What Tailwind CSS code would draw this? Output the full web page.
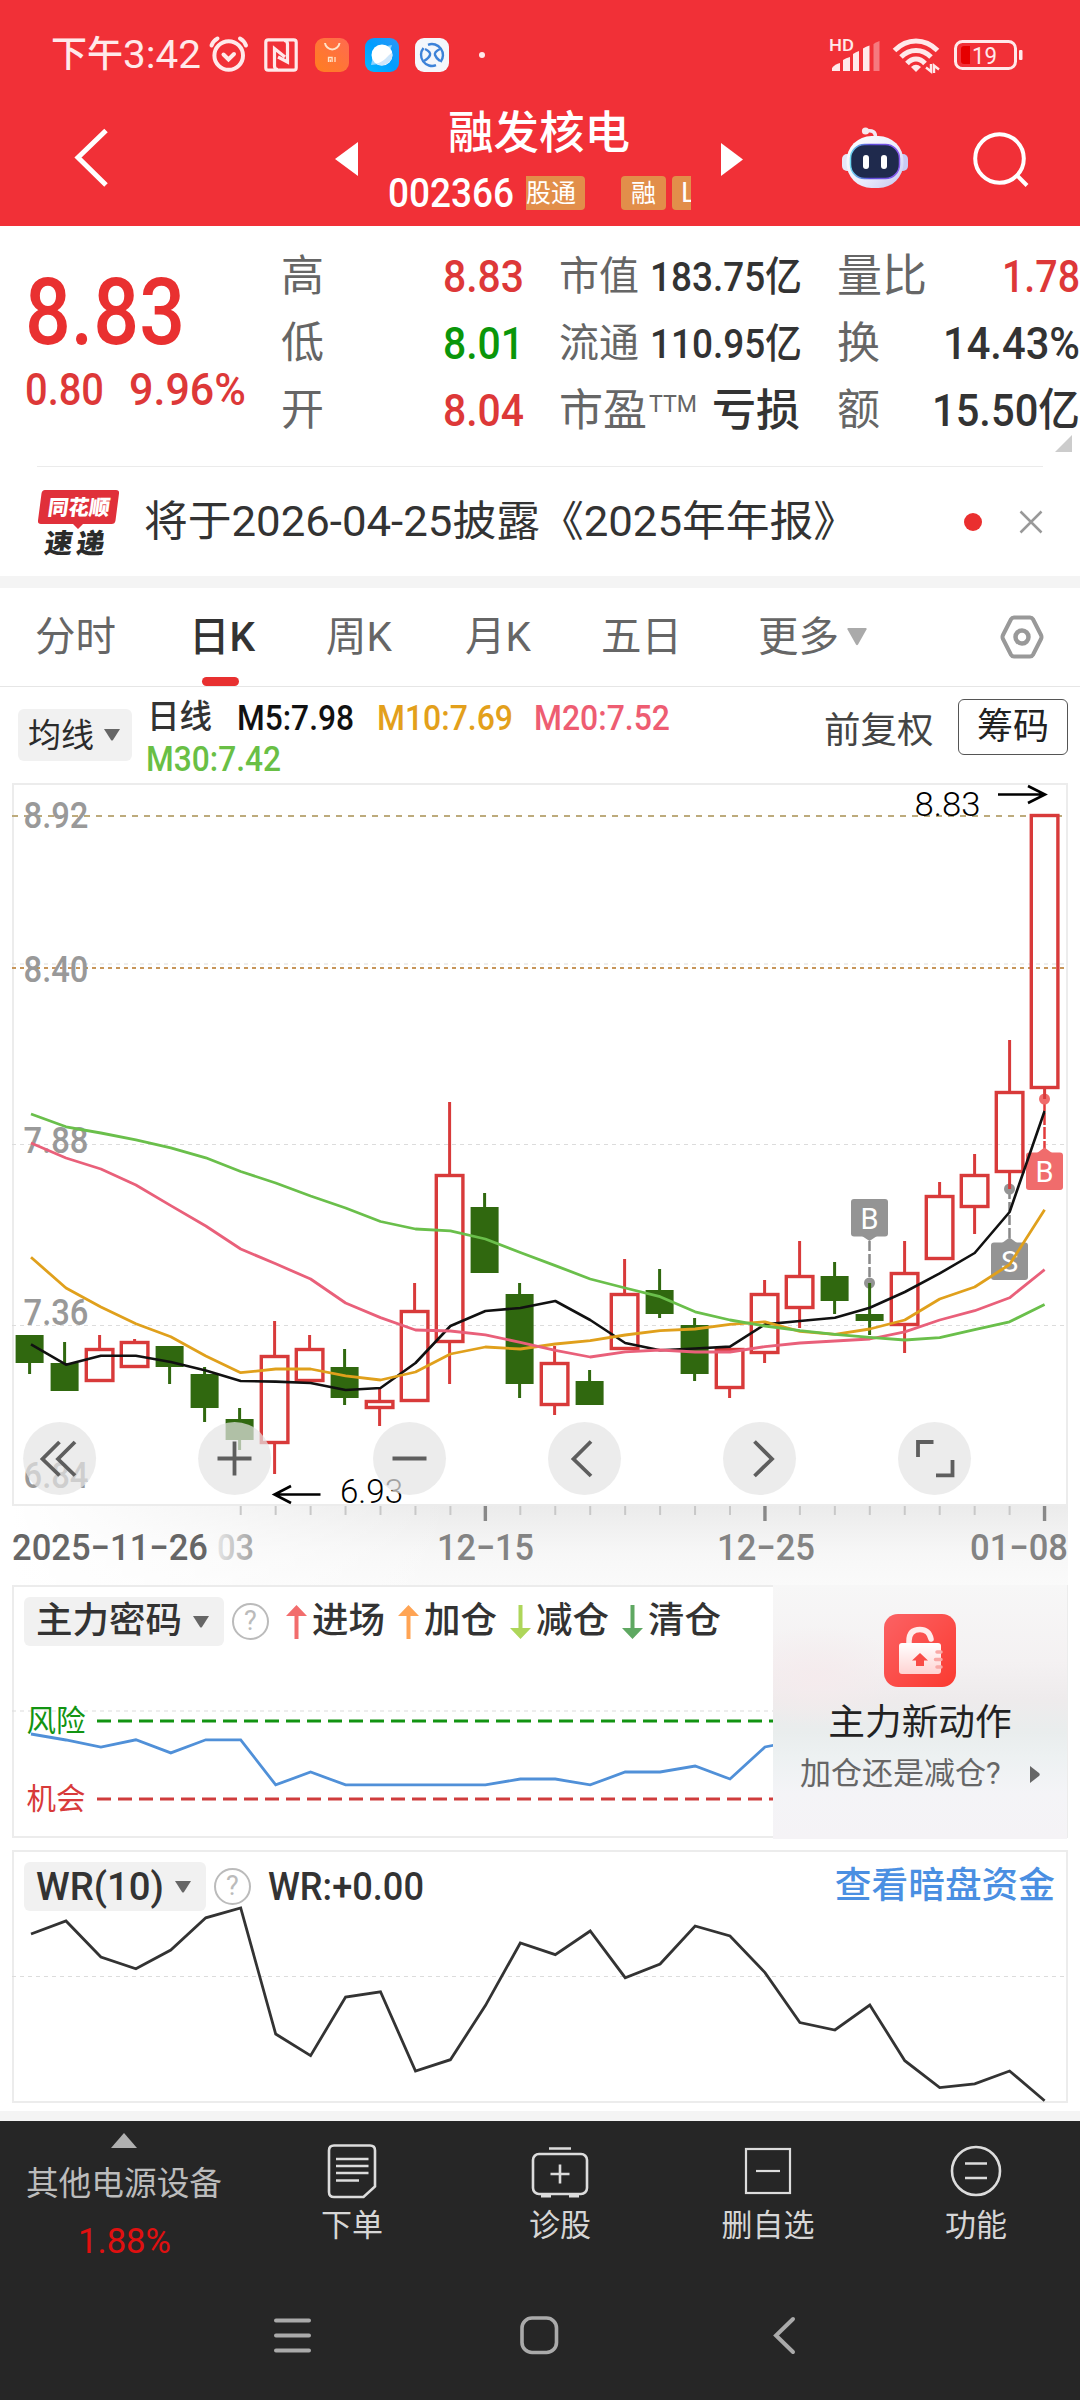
<!DOCTYPE html>
<html lang="zh-CN">
<head>
<meta charset="utf-8">
<title>融发核电 002366</title>
<script src="https://cdn.jsdelivr.net/npm/@tailwindcss/browser@4"></script>
</head>
<body class="bg-white">
<div class="w-[1080px] h-[2400px] overflow-hidden flex flex-col bg-white text-[#333] leading-none whitespace-nowrap font-['Roboto','Noto_Sans_CJK_SC',sans-serif]">

  <!-- status bar -->
  <div class="h-[109px] shrink-0 bg-[#f13037] text-[#ffe9ea] flex items-center pl-[51px]">
    <div class="flex items-center w-[156px]"><span class="text-[36px] font-medium">下午</span><span class="text-[39px]" data-w="78">3:42</span></div>
    <svg class="w-[44px] h-[44px]" viewBox="207 33 44 44" fill="none" stroke="#ffe9ea" stroke-width="4" stroke-linecap="round"><circle cx="228.7" cy="55.5" r="14.3"/><path d="M211.500 45.500q1.500-4.500 6-7M246 45.500q-1.500-4.500-6-7M223.500 54.500l5 5 5.500-5.500"/></svg>
    <svg class="w-[36px] h-[36px] ml-[12px]" viewBox="0 0 36 36" fill="none" stroke="#ffe9ea" stroke-width="3.200"><rect x="2.800" y="2.800" width="30.400" height="30.400" rx="2.500"/><path d="M15 32.500q-3.500 0-3.500-3.500V11.500L22 20M21 3.500q3.500 0 3.500 3.500v18L15 20"/></svg>
    <svg class="w-[34px] h-[34px] ml-[16px]" viewBox="0 0 34 34" fill="none"><defs><linearGradient id="mi" x1="0" y1="1" x2="1" y2="0"><stop offset="0" stop-color="#ff7f1f"/><stop offset="1" stop-color="#ff6a50"/></linearGradient></defs><rect width="34" height="34" rx="9" fill="url(#mi)"/><path d="M10 5a7.300 7.300 0 0 0 14.500 0" stroke="#ffe3c8" stroke-width="2"/><path d="M13.500 24v-4.500h3.600V24M15.300 21.500V24M20 19v5" stroke="#ffe3c8" stroke-width="1.300"/></svg>
    <svg class="w-[34px] h-[34px] ml-[16px]" viewBox="0 0 34 34"><defs><linearGradient id="bl" x1="1" y1="0" x2="0" y2="1"><stop offset="0" stop-color="#2f96f5"/><stop offset="0.500" stop-color="#009dff"/><stop offset="1" stop-color="#06b8ff"/></linearGradient></defs><rect width="34" height="34" rx="9" fill="url(#bl)"/><path d="M27 7l-3 9-7-7zM6 27l2-9 7 8z" fill="#8bd2ff"/><circle cx="17" cy="17" r="10.500" fill="#fff"/><path d="M27 14.500A10.500 10.500 0 0 1 11 25.500C19 24.500 22 18 27 14.500z" fill="#cfe6fa"/></svg>
    <svg class="w-[34px] h-[34px] ml-[16px]" viewBox="0 0 34 34" fill="none" stroke="#3d82d8"><rect width="34" height="34" rx="9" fill="#f4f7fc" stroke="none"/><path d="M13 6.800A11 11 0 0 1 25.500 24M21 27.200A11 11 0 0 1 8.500 10" stroke-width="2.400"/><path d="M10 11q6 3 5 6t-6 6M25 11q-6 3-5 6t5 6" stroke-width="2.400"/></svg>
    <div class="size-[6px] rounded-full bg-[#ffe9ea] ml-[30px]"></div>
    <svg class="w-[200px] h-[44px] ml-[340px]" viewBox="825 32 200 44" fill="none">
      <text x="829" y="50" font-size="17" font-weight="500" fill="#ffe9ea" textLength="25" lengthAdjust="spacingAndGlyphs">HD</text>
      <g fill="#ffe9ea"><path d="M832 70v-3q3-4 8-5v8z"/><path d="M843 70V59q3-2 7-3v14zM853 70V53q3-2 6-3v20zM863 70V47.500q3-2 6.500-3V70z"/><path d="M873.500 70V43q3-2 6-3v30z" opacity=".4"/></g>
      <g stroke="#ffe9ea" stroke-width="5"><path d="M894.500 49.500q9.500-9.500 21.500-9.500t21.500 9.500" /><path d="M901 56q6.500-6.500 15-6.500t15 6.500"/><path d="M907 62.500q4-4.500 9-4.500t9 4.500"/></g>
      <path d="M911 66q5-4.500 10 0l-5 5z" fill="#ffe9ea"/><path d="M931 63v7.500l-5-4M934 72v-7.500l5 4" stroke="#ffe9ea" stroke-width="2.400"/>
      <rect x="955.500" y="40.500" width="60" height="27" rx="7" stroke="#ffe9ea" stroke-width="3"/><rect x="1019" y="49" width="3.500" height="10" rx="1" fill="#ffe9ea"/>
      <path d="M961 48q0-3 3-3h6v18h-6q-3 0-3-3z" fill="#e60000"/>
      <text x="972" y="62.500" font-size="23.500" fill="#ffe9ea" textLength="25" lengthAdjust="spacingAndGlyphs">19</text>
    </svg>
  </div>

  <!-- title bar -->
  <div class="h-[117px] shrink-0 bg-[#f13037] text-white flex items-start">
    <svg class="w-[50px] h-[70px] ml-[65px] mt-[14px]" viewBox="65 123 50 70" fill="none" stroke="#fff" stroke-width="5"><path d="M106 130.500L78 157.500l28 27.500"/></svg>
    <svg class="w-[23px] h-[34px] ml-[220px] mt-[33px]" viewBox="0 0 23 34"><path d="M0 17L23 0v34z" fill="#fff"/></svg>
    <div class="w-[303px] ml-[30px] flex flex-col">
      <div class="h-[46px] flex items-center text-[45.500px] font-medium pl-[60px] pt-[3px]">融发核电</div>
      <div class="h-[34px] mt-[21px] flex items-center">
        <span class="text-[40px] font-medium" data-w="126">002366</span>
        <div class="flex ml-[12px] w-[165px] overflow-hidden text-[25px]">
          <div class="w-[59px] h-[34px] shrink-0 rounded-r-[4px] bg-[#e28e4a] flex items-center justify-end pr-[9px]">股通</div>
          <div class="w-[45px] h-[34px] ml-[36px] shrink-0 rounded-[4px] bg-[#e28e4a] flex items-center justify-center">融</div>
          <div class="w-[45px] h-[34px] ml-[6px] shrink-0 rounded-[4px] bg-[#e28e4a] flex items-center pl-[9px] text-[28px]">L</div>
        </div>
      </div>
    </div>
    <svg class="w-[22px] h-[33px] ml-[30px] mt-[34px]" viewBox="0 0 22 33"><path d="M22 16.500L0 0v33z" fill="#fff"/></svg>
    <svg class="w-[70px] h-[66px] ml-[97px] mt-[16px]" viewBox="840 125 70 66" fill="none">
      <defs><linearGradient id="rb" x1="0" y1="0" x2="1" y2="1"><stop offset="0" stop-color="#fff"/><stop offset="0.600" stop-color="#e9ebfb"/><stop offset="1" stop-color="#c3c4ee"/></linearGradient><linearGradient id="rs" x1="0" y1="0" x2="1" y2="0"><stop offset="0" stop-color="#6fd8f0"/><stop offset="0.400" stop-color="#5b49d8"/><stop offset="1" stop-color="#8a5bef"/></linearGradient></defs>
      <path d="M866 131q10-2 9.500 7" stroke="#f3e9f3" stroke-width="3.500"/><circle cx="865.500" cy="131" r="3.600" fill="#f6e8ee"/>
      <rect x="842" y="154" width="12" height="17" rx="5" fill="#e6e6f8"/><rect x="896" y="154" width="12" height="17" rx="5" fill="#c9caf2"/>
      <rect x="846.500" y="136" width="57" height="52" rx="25" fill="url(#rb)"/>
      <rect x="850.500" y="144.500" width="49" height="34" rx="14" fill="#1f2a4d" stroke="url(#rs)" stroke-width="1.500"/>
      <rect x="863" y="155" width="6" height="14" rx="3" fill="#fff"/><rect x="881" y="155" width="6" height="14" rx="3" fill="#fff"/>
    </svg>
    <svg class="w-[60px] h-[60px] ml-[62px] mt-[20px]" viewBox="972 129 60 60" fill="none" stroke="#fff" stroke-width="4"><circle cx="999.500" cy="158.500" r="24.300"/><path d="M1017 175.500l10 10"/></svg>
  </div>

  <!-- quote -->
  <div class="h-[240px] shrink-0 flex text-[43px] relative">
    <div class="w-[281px] pl-[25px] flex flex-col text-[#e93030] font-medium">
      <div class="h-[70px] mt-[51px] flex items-center text-[92px]"><span data-w="160">8.83</span></div>
      <div class="h-[50px] mt-[17px] flex items-center text-[45px] text-[#dd3838] gap-[25px]"><span data-w="79">0.80</span><span data-w="117">9.96%</span></div>
    </div>
    <div class="w-[243px] pt-[17px] text-[#666]">
      <div class="h-[67px] flex items-center justify-between"><span>高</span><span class="text-[45px] font-medium text-[#dd3838]" data-w="81">8.83</span></div>
      <div class="h-[67px] flex items-center justify-between"><span>低</span><span class="text-[45px] font-medium text-[#0a960a]" data-w="81">8.01</span></div>
      <div class="h-[67px] flex items-center justify-between"><span>开</span><span class="text-[45px] font-medium text-[#dd3838]" data-w="81">8.04</span></div>
    </div>
    <div class="w-[243px] ml-[35px] pt-[17px] text-[#666]">
      <div class="h-[67px] flex items-center justify-between"><span class="text-[40px]">市值</span><span class="text-[41px] font-medium text-[#333]" data-w="152">183.75亿</span></div>
      <div class="h-[67px] flex items-center justify-between"><span class="text-[40px]">流通</span><span class="text-[41px] font-medium text-[#333]" data-w="152">110.95亿</span></div>
      <div class="h-[67px] flex items-center"><span class="text-[44px]">市盈</span><span class="text-[24px] mt-[-14px] ml-[2px]" data-w="48">TTM</span><span class="ml-[15px] font-medium text-[#333] text-[44px]">亏损</span></div>
    </div>
    <div class="w-[243px] ml-[35px] pt-[17px] text-[#666]">
      <div class="h-[67px] flex items-center justify-between"><span class="text-[45px]">量比</span><span class="text-[45px] font-medium text-[#dd3838]" data-w="78">1.78</span></div>
      <div class="h-[67px] flex items-center justify-between"><span>换</span><span class="text-[45px] font-medium text-[#333]" data-w="137">14.43%</span></div>
      <div class="h-[67px] flex items-center justify-between"><span>额</span><span class="text-[45px] font-medium text-[#333]" data-w="148">15.50亿</span></div>
    </div>
    <svg class="absolute left-[1055px] top-[209px] w-[17px] h-[17px]" viewBox="0 0 17 17"><path d="M17 0v17H0z" fill="#ccc"/></svg>
  </div>

  <!-- news -->
  <div class="h-[110px] shrink-0 mx-[37px] border-t border-[#ebebeb] flex items-center">
    <svg class="w-[84px] h-[68px] shrink-0" viewBox="37 486 84 68">
      <path d="M45 488h71q3.500 0 3 3.500l-3.500 27q-.500 3.500-4 3.500H83l-5 5-5-5H41q-3.500 0-3-3.500l3.500-27q.500-3.500 3.500-3.500z" fill="#e0303a"/>
      <text x="47" y="513" font-size="21" font-weight="900" fill="#fff" textLength="62" lengthAdjust="spacingAndGlyphs" transform="skewX(-8) translate(72 0)">同花顺</text>
      <g transform="skewX(-8) translate(75 0)" font-size="27" font-weight="900" fill="#2b2b2b"><text x="46" y="551" textLength="28" lengthAdjust="spacingAndGlyphs">速</text><text x="78" y="551" textLength="28" lengthAdjust="spacingAndGlyphs">递</text></g>
    </svg>
    <span class="text-[42px] ml-[23px] mt-[-2px]" data-w="713">将于2026-04-25披露《2025年年报》</span>
    <div class="size-[18px] rounded-full bg-[#ea2f2f] ml-[107px]"></div>
    <svg class="w-[24px] h-[24px] ml-[37px]" viewBox="0 0 24 24" stroke="#999" stroke-width="2.500"><path d="M1.500 1.500l21 21M22.500 1.500l-21 21"/></svg>
  </div>

  <div class="h-[12px] shrink-0 bg-[#f4f4f4]"></div>

  <!-- period tabs -->
  <div class="h-[99px] shrink-0 border-b border-[#e6e6e6] flex items-center pl-[35px] text-[40.500px] text-[#666]">
    <div class="w-[154px]">分时</div>
    <div class="w-[137px] h-full relative flex items-center font-medium text-[#333]">日K<div class="absolute left-[13px] bottom-0 w-[37px] h-[9px] rounded-full bg-[#e83030]"></div></div>
    <div class="w-[139px]">周K</div>
    <div class="w-[136px]">月K</div>
    <div class="w-[157px]">五日</div>
    <div class="w-[89px]">更多</div>
    <svg class="w-[20px] h-[18px]" viewBox="0 0 20 18"><path d="M1 0h18q1 0 .5 1.500L11 16.500q-1 1.500-2 0L.5 1.500Q0 0 1 0z" fill="#aaa"/></svg>
    <svg class="w-[44px] h-[44px] ml-[133px]" viewBox="0 0 44 44" fill="none" stroke="#999"><path d="M14 2.500h16q2 0 3 1.800l8 15.700q1 2 0 4l-8 15.700q-1 1.800-3 1.800H14q-2 0-3-1.800L3 24q-1-2 0-4l8-15.700q1-1.800 3-1.800z" stroke-width="4"/><circle cx="22" cy="22" r="6.500" stroke-width="4.500"/></svg>
  </div>

  <!-- moving average legend -->
  <div class="h-[96px] shrink-0 flex items-start pl-[18px]">
    <div class="w-[114px] h-[52px] mt-[22px] rounded-[6px] bg-[#f1f1f1] flex items-center pl-[10px] text-[33px] text-[#2b2b2b]">均线<svg class="w-[16px] h-[12px] ml-[10px]" viewBox="0 0 16 12"><path d="M0 0h16L9 11q-1 1-2 0z" fill="#666"/></svg></div>
    <div class="ml-[14px] mt-[10px] w-[620px] flex flex-col text-[35px] font-medium">
      <div class="h-[41px] flex items-center pl-[1px]"><span class="text-[32.500px] w-[90px]">日线</span><div class="w-[140px] text-[#111]"><span data-w="117">M5:7.98</span></div><div class="w-[157px] text-[#e3a01b]"><span data-w="136">M10:7.69</span></div><div class="text-[#ee5d72]"><span data-w="136">M20:7.52</span></div></div>
      <div class="h-[41px] flex items-center text-[#69bf45]"><span data-w="135">M30:7.42</span></div>
    </div>
    <span class="text-[36.500px] text-[#444] mt-[26px] ml-[58px] w-[134px]">前复权</span>
    <div class="w-[110px] h-[56px] mt-[12px] border-[1.500px] border-[#555] rounded-[6px] flex items-center justify-center text-[36px] text-[#222]">筹码</div>
  </div>

  <!-- candlestick chart -->
  <svg id="kline" class="w-[1080px] h-[802px] shrink-0" viewBox="0 783 1080 802" fill="none">
    <defs>
      <linearGradient id="axv" x1="0" y1="0" x2="0" y2="1"><stop offset="0" stop-color="#ebebeb"/><stop offset="0.600" stop-color="#f7f7f7"/><stop offset="1" stop-color="#fafafa"/></linearGradient>
      <linearGradient id="axh" x1="0" y1="0" x2="1" y2="0"><stop offset="0" stop-color="#fff"/><stop offset="1" stop-color="#fff" stop-opacity="0"/></linearGradient>
      <linearGradient id="fade" gradientUnits="userSpaceOnUse" x1="215" y1="0" x2="256" y2="0"><stop offset="0" stop-color="#eaeaea"/><stop offset="1" stop-color="#9f9f9f"/></linearGradient>
    </defs>
    <rect x="12" y="1506" width="1056" height="79" fill="url(#axv)"/><rect x="12" y="1506" width="440" height="79" fill="url(#axh)"/>
    <rect x="13" y="784" width="1054" height="721" stroke="#ececec" stroke-width="2"/>
    <g stroke-width="1.200" stroke="#dcdcdc" stroke-dasharray="4 4"><path d="M12 964h1054M12 1144.500h1054M12 1325.500h1054"/></g>
    <path d="M12 816h1054" stroke="#bdab7c" stroke-width="2" stroke-dasharray="6 6"/>
    <path d="M12 968h1054" stroke="#c8965a" stroke-width="2" stroke-dasharray="4 4"/>
    <g font-size="37" font-weight="500" fill="#999">
      <text x="23.500" y="827.500" textLength="65" lengthAdjust="spacingAndGlyphs">8.92</text><text x="23.500" y="982" textLength="65" lengthAdjust="spacingAndGlyphs">8.40</text><text x="23.500" y="1153" textLength="65" lengthAdjust="spacingAndGlyphs">7.88</text><text x="23.500" y="1325" textLength="65" lengthAdjust="spacingAndGlyphs">7.36</text><text x="23.500" y="1488" textLength="65" lengthAdjust="spacingAndGlyphs">6.84</text>
    </g>
    <g>
      <path d="M869.500 1241v42M1009.500 1189v50" stroke="#888" stroke-width="2.500" stroke-dasharray="10 3"/><path d="M1044.500 1099v50" stroke="#e23c3c" stroke-width="2.500" stroke-dasharray="12 2"/>
      <g fill="#949494"><circle cx="869.500" cy="1283" r="5.500"/><circle cx="1009.500" cy="1189" r="5.500"/><rect x="851" y="1199" width="37" height="37.500" rx="3"/><path d="M862 1236l7.500 5 7.500-5z"/><rect x="991" y="1242.500" width="37" height="37.500" rx="3"/><path d="M1002 1243l7.500-5.500 7.500 5.500z"/></g>
      <g fill="#f06c6c"><circle cx="1044.500" cy="1099" r="5.500"/><rect x="1026" y="1152.500" width="37" height="37.500" rx="3"/><path d="M1037 1153l7.500-5.500 7.500 5.500z"/></g>
      <g fill="#fff" font-size="29" text-anchor="middle"><text x="869.500" y="1229">B</text><text x="1009.500" y="1272">S</text><text x="1044.500" y="1182">B</text></g>
    </g>
    <g id="candles"></g>
    <g id="ma" stroke-linejoin="round"></g>
    <g fill="#000" font-size="33"><text x="914.500" y="815.500" textLength="66" lengthAdjust="spacingAndGlyphs" font-weight="300">8.83</text><text x="340" y="1503" textLength="63" lengthAdjust="spacingAndGlyphs" font-weight="300">6.93</text></g>
    <path d="M998 794.500h46M1028 786l17 8.500-17 8.500M320.500 1494.500h-45M291 1486l-16.500 8.500 16.500 8.500" stroke="#000" stroke-width="2.600"/>
    <g fill="#e4e4e4" fill-opacity=".71"><circle cx="59.600" cy="1458.500" r="36.500"/><circle cx="234.600" cy="1458.500" r="36.500"/><circle cx="409.500" cy="1458.500" r="36.500"/><circle cx="584.500" cy="1458.500" r="36.500"/><circle cx="759.500" cy="1458.500" r="36.500"/><circle cx="934.500" cy="1458.500" r="36.500"/></g>
    <g stroke="#5e5e5e" stroke-width="3.800"><path d="M59.500 1442L42.500 1459l17 16.500M75 1442L58 1459l17 16.500M217.500 1458.500h34M234.500 1441.500v34M392.500 1458.500h34M591 1441.500L573.500 1459l17.500 17M754.500 1441.500l17.500 17.500-17.500 17M918 1457v-15h15.500M936 1475.300h16.500V1460"/></g>
    <g id="ticks"></g>
    <g font-size="36.500" font-weight="500" fill="#838383"><text x="217" y="1560" fill="url(#fade)" textLength="37" lengthAdjust="spacingAndGlyphs">03</text><text x="12" y="1560" fill="#666" textLength="196" lengthAdjust="spacingAndGlyphs">2025−11−26</text><text x="437" y="1560" textLength="97" lengthAdjust="spacingAndGlyphs">12−15</text><text x="717" y="1560" textLength="98" lengthAdjust="spacingAndGlyphs">12−25</text><text x="970" y="1560" textLength="98" lengthAdjust="spacingAndGlyphs">01−08</text></g>
  </svg>

  <!-- main force panel -->
  <div class="h-[253px] shrink-0 mx-[12px] relative border-2 border-[#ececec] bg-white">
    <svg id="force" class="absolute left-[-14px] top-[-2px] w-[787px] h-[253px]" viewBox="0 1585 787 253" fill="none">
      <path d="M12 1711h775" stroke="#dcdcdc" stroke-width="1.200" stroke-dasharray="4 4"/>
      <path d="M97 1721h690" stroke="#129412" stroke-width="2.800" stroke-dasharray="14 7"/><path d="M97 1799h690" stroke="#cf3c3c" stroke-width="2.800" stroke-dasharray="14 7"/>
      <g font-size="29.500"><text x="26.500" y="1731" fill="#129412">风险</text><text x="26.500" y="1809" fill="#d83a3a">机会</text></g>
    </svg>
    <div class="relative flex items-center h-[49px] mt-[10px] ml-[10px] text-[36.500px] text-[#333]">
      <div class="w-[200px] h-[49px] rounded-[6px] bg-[#f1f1f1] flex items-center pl-[12px] font-medium">主力密码<svg class="w-[16px] h-[12px] ml-[11px]" viewBox="0 0 16 12"><path d="M0 0h16L9 11q-1 1-2 0z" fill="#666"/></svg></div>
      <div class="size-[37px] ml-[8px] rounded-full border-[2.500px] border-[#bbb] text-[#bbb] text-[27px] flex items-center justify-center">?</div>
      <div class="flex ml-[17px] font-medium">
        <div class="w-[112px] flex items-center gap-[5px]"><svg class="w-[21px] h-[34px]" viewBox="0 0 21 34"><path d="M10.500 0L21 11h-8.500v23h-4V11H0z" fill="#f26d6d"/></svg>进场</div>
        <div class="w-[112px] flex items-center gap-[5px]"><svg class="w-[21px] h-[34px]" viewBox="0 0 21 34"><path d="M10.500 0L21 11h-8.500v23h-4V11H0z" fill="#ffa454"/></svg>加仓</div>
        <div class="w-[112px] flex items-center gap-[5px]"><svg class="w-[21px] h-[34px]" viewBox="0 0 21 34"><path d="M10.500 34L21 23h-8.500V0h-4v23H0z" fill="#aed65a"/></svg>减仓</div>
        <div class="w-[112px] flex items-center gap-[5px]"><svg class="w-[21px] h-[34px]" viewBox="0 0 21 34"><path d="M10.500 34L21 23h-8.500V0h-4v23H0z" fill="#5fa862"/></svg>清仓</div>
      </div>
    </div>
    <div class="absolute left-[759px] top-[-2px] w-[294px] h-[254px] flex flex-col items-center bg-[radial-gradient(ellipse_90px_50px_at_15%_36%,#f5ebed,transparent),linear-gradient(180deg,#f7f7f7_0%,#f4f1f2_30%,#eeebec_45%,#e9eded_58%,#edf1f2_68%,#f4f4f7_82%,#f5f3f6_100%)]">
      <svg class="w-[72px] h-[73px] mt-[29px] ml-[-1px]" viewBox="0 0 72 73" fill="none"><defs><linearGradient id="lk" x1="0" y1="0" x2="1" y2="1"><stop offset="0" stop-color="#fb6264"/><stop offset="1" stop-color="#fb3a30"/></linearGradient><linearGradient id="lb" x1="0" y1="0" x2="0" y2="1"><stop offset="0" stop-color="#fff"/><stop offset="1" stop-color="#ffd3d2"/></linearGradient></defs><rect width="72" height="73" rx="14" fill="url(#lk)"/><path d="M25 31v-4q0-11.500 11-11.500 9 0 11 9.500" stroke="#ffeceb" stroke-width="5.500" stroke-linecap="round"/><rect x="15" y="29" width="42" height="31" rx="3" fill="url(#lb)"/><path d="M53 38h4M51.500 45.500H57M53 53h4" stroke="#f9a9a6" stroke-width="3.500" stroke-linecap="round"/><path d="M36 39l8 7.500h-4V52h-8v-5.500h-4z" fill="#f94c47"/></svg>
      <div class="text-[36.700px] text-[#222] mt-[18px] h-[36px]">主力新动作</div>
      <div class="w-full flex items-center mt-[17px] pl-[27px] text-[31px] text-[#666]">加仓还是减仓?<svg class="w-[10px] h-[17px] ml-[29px] mt-[2px]" viewBox="0 0 10 17"><path d="M0 0l9 7q1.500 1.500 0 3L0 17z" fill="#666"/></svg></div>
    </div>
  </div>

  <!-- WR panel -->
  <div class="h-[253px] shrink-0 mt-[12px] mx-[12px] relative border-2 border-[#ececec] bg-white">
    <div class="relative flex items-center h-[49px] mt-[10px] ml-[10px] text-[38px] text-[#333] font-medium">
      <div class="w-[182px] h-[49px] rounded-[6px] bg-[#f1f1f1] flex items-center pl-[12px]"><span data-w="128">WR(10)</span><svg class="w-[16px] h-[12px] ml-[11px]" viewBox="0 0 16 12"><path d="M0 0h16L9 11q-1 1-2 0z" fill="#666"/></svg></div>
      <div class="size-[37px] ml-[8px] rounded-full border-[2.500px] border-[#bbb] text-[#bbb] text-[27px] font-normal flex items-center justify-center">?</div>
      <span class="ml-[17px]" data-w="156">WR:+0.00</span>
      <span class="ml-auto mr-[11px] text-[36.700px] text-[#4a8fe2]">查看暗盘资金</span>
    </div>
    <svg id="wr" class="absolute left-[-14px] top-[-2px] w-[1080px] h-[253px]" viewBox="0 1850 1080 253" fill="none"><path d="M12 1976.500h1054" stroke="#dcdcdc" stroke-width="1.200" stroke-dasharray="4 4"/></svg>
  </div>
  <div class="h-[10px] shrink-0 mt-[8px] bg-[#f4f4f4]"></div>

  <!-- bottom toolbar -->
  <div class="h-[146px] shrink-0 bg-[#262626] flex text-[31px] text-[#d6d6d6]">
    <div class="w-[248px] flex flex-col items-center text-[#bcbcbc]">
      <svg class="w-[26px] h-[15px] mt-[12px]" viewBox="0 0 26 15"><path d="M13 0l13 15H0z" fill="#b0b0b0"/></svg>
      <div class="text-[32.700px] mt-[20px] h-[33px]">其他电源设备</div>
      <div class="text-[35px] text-[#e01010] mt-[22px]"><span data-w="93">1.88%</span></div>
    </div>
    <div class="w-[208px] flex flex-col items-center">
      <svg class="w-[50px] h-[56px] mt-[22px]" viewBox="0 0 50 56" fill="none" stroke="#dcdcdc" stroke-width="2.600"><path d="M7 2.500h36q5 0 5 5v36L36.500 54H7q-5 0-5-5V7.500q0-5 5-5z"/><path d="M9 16h32.500M9 23h32.500M9 30h32.500M9 37.500h23"/></svg>
      <div class="mt-[11px]">下单</div>
    </div>
    <div class="w-[208px] flex flex-col items-center">
      <svg class="w-[58px] h-[52px] mt-[25px]" viewBox="0 0 58 52" fill="none" stroke="#dcdcdc" stroke-width="2.600"><rect x="2" y="8" width="54" height="40" rx="6"/><path d="M18 2.500h22M19.500 28h19M29 18.500v19"/><path d="M10 50h10M38 50h10" stroke-width="3"/></svg>
      <div class="mt-[12px]">诊股</div>
    </div>
    <div class="w-[208px] flex flex-col items-center">
      <svg class="w-[48px] h-[48px] mt-[26px]" viewBox="0 0 48 48" fill="none" stroke="#dcdcdc" stroke-width="2.200"><rect x="2" y="2" width="44" height="44"/><path d="M12 24h24"/></svg>
      <div class="mt-[15px]">删自选</div>
    </div>
    <div class="w-[208px] flex flex-col items-center">
      <svg class="w-[52px] h-[52px] mt-[24px]" viewBox="0 0 52 52" fill="none" stroke="#dcdcdc" stroke-width="2.600"><circle cx="26" cy="26" r="24"/><path d="M15 18.500h22M15 33h22"/></svg>
      <div class="mt-[13px]">功能</div>
    </div>
  </div>
  <!-- system navigation -->
  <div class="h-[133px] shrink-0 bg-[#262626] flex pt-[47px] pl-[272px]">
    <svg class="w-[40px] h-[42px]" viewBox="0 0 40 42" stroke="#aaa" stroke-width="4" stroke-linecap="round"><path d="M4 6.500h33M4 21.500h33M4 36.500h33"/></svg>
    <svg class="w-[40px] h-[42px] ml-[207px]" viewBox="0 0 40 42" fill="none" stroke="#aaa" stroke-width="3.600"><rect x="3" y="4" width="34.500" height="34.500" rx="10"/></svg>
    <svg class="w-[30px] h-[42px] ml-[211px]" viewBox="0 0 30 42" fill="none" stroke="#aaa" stroke-width="4" stroke-linecap="round"><path d="M23 5L6 21.500 23 38"/></svg>
  </div>
</div>

<script>
  var NS = 'http://www.w3.org/2000/svg';
  function add(parent, tag, attrs) {
    var e = document.createElementNS(NS, tag);
    for (var k in attrs) e.setAttribute(k, attrs[k]);
    parent.appendChild(e);
    return e;
  }
  document.querySelectorAll('[data-w]').forEach(function (el) {
    var w = el.dataset.w, s = el.textContent;
    el.textContent = '';
    var svg = add(el, 'svg', {width: w, height: '1em', overflow: 'visible', fill: 'currentColor'});
    add(svg, 'text', {x: 0, y: '0.85em', textLength: w, lengthAdjust: 'spacingAndGlyphs'}).textContent = s;
  });

  // direction, high, body top, body bottom, low
  var rows = [
    ['g',1335,1335,1363,1374],['g',1342,1363,1391,1391],['r',1335,1348,1382,1382],['r',1339,1341,1368,1368],['g',1346,1346,1367,1384],
    ['g',1367,1374,1408,1422],['g',1408,1419,1440,1450],['r',1321,1355,1444,1474],['r',1335,1348,1382,1382],['g',1349,1367,1398,1405],
    ['r',1388,1400,1409,1426],['r',1283,1310,1402,1402],['r',1102,1174,1343,1384],['g',1193,1207,1273,1273],['g',1283,1294,1384,1398],
    ['r',1346,1362,1406,1415],['g',1370,1381,1405,1405],['r',1259,1293,1350,1350],['g',1269,1290,1314,1318],['g',1318,1325,1374,1381],
    ['r',1348,1348,1389,1398],['r',1280,1293,1354,1363],['r',1241,1275,1309,1328],['g',1262,1276,1301,1314],['g',1283,1314,1321,1335],
    ['r',1241,1272,1326,1353],['r',1182,1195,1260,1260],['r',1154,1174,1208,1234],['r',1040,1091,1173,1189],['r',814,814,1089,1099]
  ];
  var c = document.getElementById('candles');
  rows.forEach(function (r, i) {
    var x = 29.6 + 35 * i, col = r[0] === 'g' ? '#30680f' : '#d83a3a';
    if (r[1] < r[2]) add(c, 'path', {d: 'M' + x + ' ' + r[1] + 'V' + r[2], stroke: col, 'stroke-width': 3});
    if (r[4] > r[3]) add(c, 'path', {d: 'M' + x + ' ' + r[3] + 'V' + r[4], stroke: col, 'stroke-width': 3});
    if (r[0] === 'g') add(c, 'rect', {x: x - 14, y: r[2], width: 28, height: r[3] - r[2], fill: col});
    else add(c, 'rect', {x: x - 13.3, y: r[2] + 1.5, width: 26.6, height: r[3] - r[2] - 3, stroke: col, 'stroke-width': 3.4});
  });
  function line(id, ys, color, width) {
    add(document.getElementById(id), 'polyline', {points: ys.map(function (y, i) { return (31 + 34.95 * i).toFixed(1) + ',' + y; }).join(' '), stroke: color, 'stroke-width': width});
  }
  line('ma', [1344.4,1364.7,1355.8,1355.8,1362,1370.6,1381,1381.6,1383,1390,1388,1363,1326,1311,1308,1301,1320,1343,1350.3,1348.5,1346.6,1324.4,1321,1317.8,1307.8,1292,1273.4,1253,1212,1111], '#111', 2.6);
  line('ma', [1257.3,1288,1307,1323.8,1336.8,1356,1372.7,1369,1369,1375.8,1380,1372,1354,1347,1349,1344,1340.7,1335,1330.7,1329,1324.4,1321.8,1331.4,1334.4,1329,1320,1299,1287,1264.5,1209.7], '#e0a01c', 2.8);
  line('ma', [1143,1158,1169,1185,1205.6,1226,1249,1263.8,1279,1303,1317.6,1330,1331,1334.8,1342.4,1350.3,1357,1351.8,1350,1352,1352,1346.6,1343,1341,1339,1331.8,1320,1310.7,1297.8,1269.7], '#e9607a', 2.8);
  line('ma', [1114,1126.8,1133,1139.9,1147.8,1157.8,1171.5,1183,1196,1208,1221.5,1229,1230.8,1239,1252.5,1265.6,1279,1288,1296.7,1311.8,1320,1326,1330.7,1334.4,1337.4,1340,1337.7,1329.6,1321.8,1304.4], '#6abf4b', 2.8);
  line('force', [1734,1740,1747,1739.8,1752.9,1739.8,1739.8,1784.9,1772,1784.9,1784.9,1784.9,1784.9,1784.9,1779,1779,1784.9,1772,1772,1766,1779,1747,1740], '#5090d8', 2.8);
  line('wr', [1934,1921,1957,1968.8,1950,1917.8,1908,2034,2055.6,1997,1991.8,2071,2059.7,2005.6,1943,1954.7,1931,1977.7,1964,1926,1936,1972.6,2022.5,2030,2005,2060.7,2087.6,2083.8,2071,2100.7], '#333', 2.8);
  for (var i = 6; i < 30; i++) {
    var big = i === 13 || i === 21 || i === 29;
    add(document.getElementById('ticks'), 'path', {d: 'M' + (31 + 34.95 * i) + ' 1506V' + (big ? 1521 : 1515), stroke: big ? '#888' : '#c8c8c8', 'stroke-width': big ? 3.4 : 2});
  }
</script>
</body>
</html>
